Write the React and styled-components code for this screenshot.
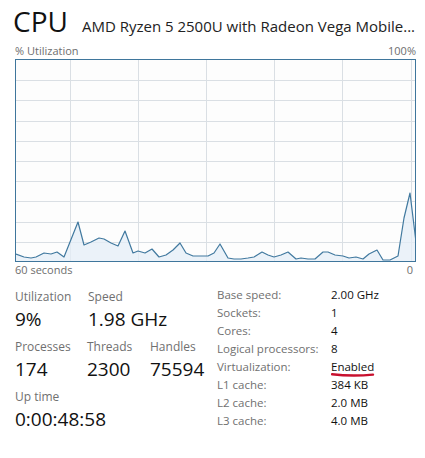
import React from "react";
import styled, { createGlobalStyle } from "styled-components";

const GlobalStyle = createGlobalStyle`
  html, body {
    margin: 0;
    padding: 0;
    background: #ffffff;
  }
  body {
    font-family: "Open Sans", "Noto Sans", sans-serif;
    color: #1a1a1a;
  }
`;

const Page = styled.div`
  width: 425px;
  height: 458px;
  padding: 0 9px 0 15px;
  box-sizing: border-box;
  overflow: hidden;
`;

const Header = styled.div`
  display: flex;
  align-items: baseline;
  gap: 14px;
  height: 43px;
  margin-left: -2px;
`;

const Title = styled.div`
  font-size: 28px;
  line-height: 42px;
  font-weight: 400;
  color: #111;
`;

const Model = styled.div`
  font-size: 15px;
  line-height: 42px;
  color: #222;
  white-space: nowrap;
`;

const AxisRow = styled.div`
  display: flex;
  justify-content: space-between;
  font-size: 11px;
  line-height: 16px;
  color: #6e6e6e;
`;

const Chart = styled.div`
  width: 401px;
  height: 203px;
  border: 1px solid #3f769c;
  box-sizing: border-box;
  background: #fdfdfd;
`;

const Stats = styled.div`
  display: grid;
  grid-template-columns: 202px 1fr;
  margin-top: 10px;
`;

const Left = styled.div`
  display: flex;
  flex-direction: column;
  gap: 6px;
`;

const StatRow = styled.div`
  display: flex;
`;

const Stat = styled.div`
  width: ${(p) => p.$w}px;
  display: flex;
  flex-direction: column;
  white-space: nowrap;
`;

const Label = styled.div`
  font-size: 12px;
  line-height: 18px;
  color: #707070;
`;

const Big = styled.div`
  font-size: 19px;
  line-height: 26px;
  color: #111;
`;

const Specs = styled.div`
  display: grid;
  grid-template-columns: 114px 1fr;
  grid-auto-rows: 18px;
  font-size: 11.5px;
  line-height: 18px;
  margin-top: -2px;
`;

const SpecKey = styled.div`
  color: #707070;
  white-space: nowrap;
`;

const SpecVal = styled.div`
  color: #111;
  position: relative;
`;

const Scribble = styled.svg`
  position: absolute;
  left: 0;
  top: 14px;
`;

const points = [
  [0, 194], [8, 197], [15, 198], [20, 197], [28, 193], [35, 194], [41, 192],
  [48, 197], [62, 162], [68, 185], [75, 182], [83, 178], [88, 179], [95, 183],
  [102, 186], [109, 171], [117, 193], [122, 191], [129, 193], [136, 189],
  [143, 197], [150, 195], [157, 190], [164, 183], [170, 193], [177, 196],
  [185, 196], [192, 196], [198, 193], [204, 184], [212, 198], [218, 199],
  [225, 199], [232, 198], [238, 197], [246, 192], [252, 195], [258, 197],
  [265, 195], [272, 192], [280, 199], [285, 198], [292, 199], [299, 199],
  [307, 192], [312, 192], [319, 195], [327, 196], [333, 198], [340, 197],
  [347, 199], [353, 194], [361, 190], [367, 200], [374, 200], [382, 196],
  [388, 158], [394, 133], [400, 182],
];

function UsageGraph() {
  const w = 399;
  const h = 201;
  const vlines = [54, 122, 190, 258, 326, 395];
  const hlines = [1, 2, 3, 4, 5, 6, 7, 8, 9].map((k) => Math.round(k * 20.2));
  const line = points.map((p) => p.join(",")).join(" ");
  const area = `0,${h} ${line} ${w},${h}`;
  return (
    <svg width={w} height={h} viewBox={`0 0 ${w} ${h}`} style={{ display: "block" }}>
      {vlines.map((x) => (
        <line key={"v" + x} x1={x + 0.5} x2={x + 0.5} y1={0} y2={h} stroke="#dadfe4" strokeWidth="1" />
      ))}
      {hlines.map((y) => (
        <line key={"h" + y} x1={0} x2={w} y1={y + 0.5} y2={y + 0.5} stroke="#dadfe4" strokeWidth="1" />
      ))}
      <polygon points={area} fill="#e4eef7" fillOpacity="0.75" />
      <polyline points={line} fill="none" stroke="#41799f" strokeWidth="1.2" strokeLinejoin="round" />
    </svg>
  );
}

const specs = [
  ["Base speed:", "2.00 GHz"],
  ["Sockets:", "1"],
  ["Cores:", "4"],
  ["Logical processors:", "8"],
  ["Virtualization:", "Enabled", true],
  ["L1 cache:", "384 KB"],
  ["L2 cache:", "2.0 MB"],
  ["L3 cache:", "4.0 MB"],
];

export default function App() {
  return (
    <Page>
      <GlobalStyle />
      <Header>
        <Title>CPU</Title>
        <Model>AMD Ryzen 5 2500U with Radeon Vega Mobile...</Model>
      </Header>
      <AxisRow>
        <span>% Utilization</span>
        <span>100%</span>
      </AxisRow>
      <Chart>
        <UsageGraph />
      </Chart>
      <AxisRow>
        <span>60 seconds</span>
        <span style={{ marginRight: 3 }}>0</span>
      </AxisRow>
      <Stats>
        <Left>
          <StatRow>
            <Stat $w={73}>
              <Label>Utilization</Label>
              <Big>9%</Big>
            </Stat>
            <Stat $w={62}>
              <Label>Speed</Label>
              <Big>1.98 GHz</Big>
            </Stat>
          </StatRow>
          <StatRow>
            <Stat $w={72}>
              <Label>Processes</Label>
              <Big>174</Big>
            </Stat>
            <Stat $w={63}>
              <Label>Threads</Label>
              <Big>2300</Big>
            </Stat>
            <Stat $w={60}>
              <Label>Handles</Label>
              <Big>75594</Big>
            </Stat>
          </StatRow>
          <StatRow>
            <Stat $w={120}>
              <Label>Up time</Label>
              <Big>0:00:48:58</Big>
            </Stat>
          </StatRow>
        </Left>
        <Specs>
          {specs.map(([k, v, mark]) => (
            <React.Fragment key={k}>
              <SpecKey>{k}</SpecKey>
              <SpecVal>
                {v}
                {mark && (
                  <Scribble width="44" height="6" viewBox="0 0 44 6">
                    <path d="M1 2.2 C 12 3.6, 30 3.8, 42 2.6" fill="none" stroke="#c8102e" strokeWidth="2.4" strokeLinecap="round" />
                  </Scribble>
                )}
              </SpecVal>
            </React.Fragment>
          ))}
        </Specs>
      </Stats>
    </Page>
  );
}
